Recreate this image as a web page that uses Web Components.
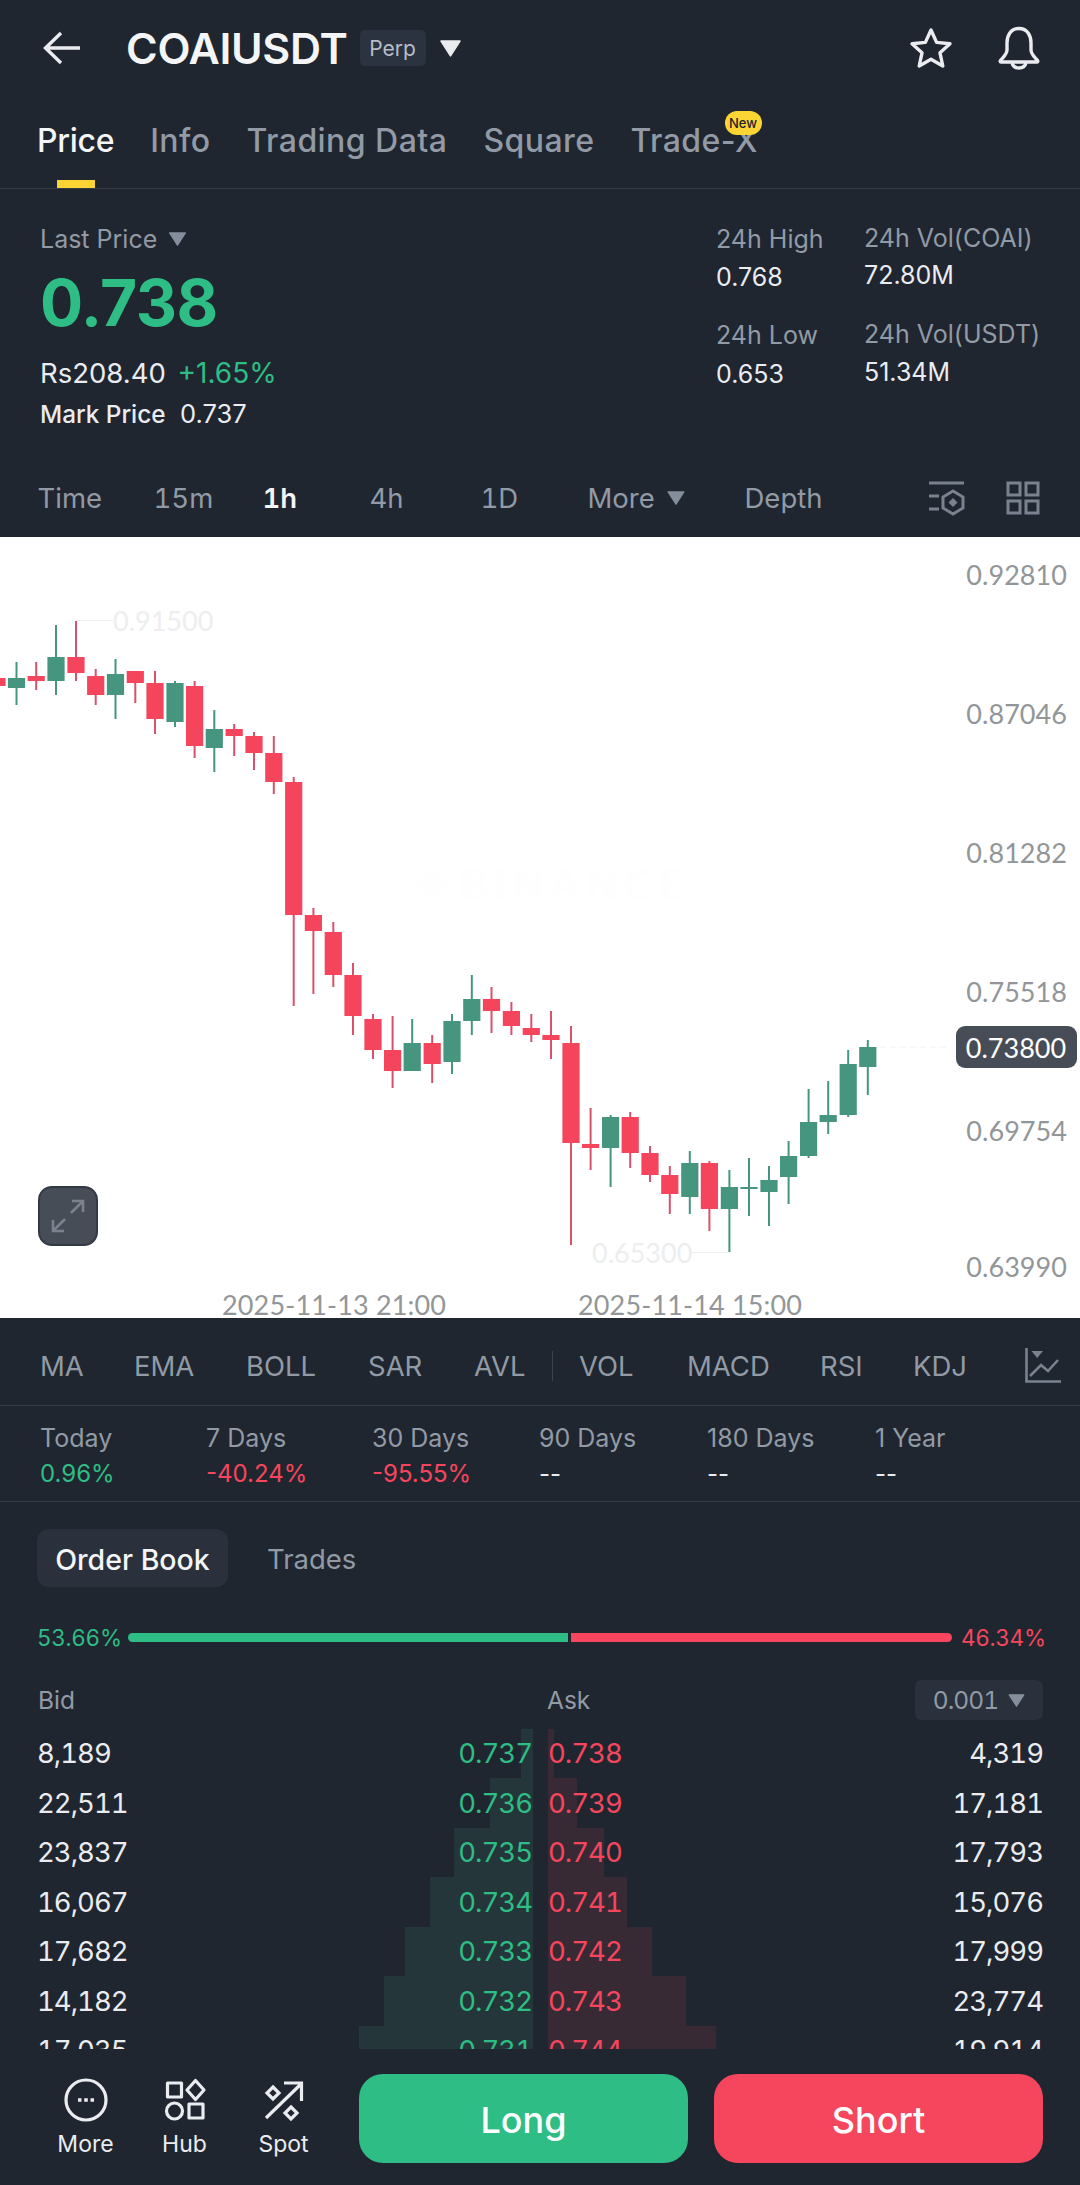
<!DOCTYPE html>
<html><head><meta charset="utf-8">
<style>
html,body{margin:0;padding:0;background:#1f2630}
body{width:1080px;height:2185px;overflow:hidden;font-family:Inter,"Liberation Sans",sans-serif;color:#eaecef}
</style></head>
<body>
<bn-app>
  <bn-topbar></bn-topbar>
  <bn-tabs></bn-tabs>
  <bn-stats></bn-stats>
  <bn-intervals></bn-intervals>
  <bn-chart></bn-chart>
  <bn-indicators></bn-indicators>
  <bn-returns></bn-returns>
  <bn-book></bn-book>
  <bn-actions></bn-actions>
</bn-app>
<script>
function def(name,html,init){
  customElements.define(name,class extends HTMLElement{
    constructor(){super();const s=this.attachShadow({mode:'open'});s.innerHTML=html;if(init)init(s);}
  });
}
const tri=(w,h,c)=>`<svg width="${w}" height="${h}" viewBox="0 0 20 16"><path d="M1 1H19L10 15Z" fill="${c}" stroke="${c}" stroke-linejoin="round" stroke-width="1.5"/></svg>`;

def('bn-app',`<style>:host{display:flex;flex-direction:column;width:1080px;height:2185px;overflow:hidden;background:#1f2630}</style><slot></slot>`);

def('bn-topbar',`<style>
:host{display:flex;align-items:center;height:96px;flex:none;box-sizing:border-box;padding-left:43px;padding-right:40px}
.t{font-size:43px;font-weight:600;color:#f4f5f6;margin-left:46px;letter-spacing:-.3px}
.b{margin-left:12px;width:66px;height:36px;border-radius:5px;background:#2b3340;color:#b7bdc6;font-size:21px;display:flex;align-items:center;justify-content:center}
.tr{margin-left:14px;display:flex}
.sp{flex:1}
svg{display:block}
</style>
<svg width="37" height="34" viewBox="0 0 37 34" fill="none" stroke="#eaecef" stroke-width="3.4"><path d="M37 17H3M18 2L2.5 17L18 32"/></svg>
<div class="t">COAIUSDT</div><div class="b">Perp</div><div class="tr">${tri(21,17,'#eaecef')}</div><div class="sp"></div>
<svg width="44" height="42" viewBox="0 0 44 42" fill="none" stroke="#eaecef" stroke-width="3.4" stroke-linejoin="round"><path d="M22 3L27.6 15.4L41 16.8L31 25.8L33.8 39L22 32.3L10.2 39L13 25.8L3 16.8L16.4 15.4Z"/></svg>
<svg width="42" height="44" viewBox="0 0 42 44" fill="none" stroke="#eaecef" stroke-width="3.4" stroke-linejoin="round" style="margin-left:45px"><path d="M21 2.5C12.5 2.5 9 9.5 9 17V24C9 28 6 30.5 2.5 34.5C2 35 2 36 3 36H39C40 36 40 35 39.5 34.5C36 30.5 33 28 33 24V17C33 9.5 29.5 2.5 21 2.5Z"/><path d="M14 37C15 40.5 18 42 21 42S27 40.5 28 37"/></svg>`);

def('bn-tabs',`<style>
:host{display:flex;height:93px;flex:none;box-sizing:border-box;border-bottom:1px solid #333b47;padding-left:37px;position:relative;gap:36px;align-items:flex-start;padding-top:26px;font-size:32px;font-weight:500;color:#929aa5;letter-spacing:.45px}
.a{color:#f4f5f6;position:relative;letter-spacing:-.3px}
.a:after{content:"";position:absolute;left:20px;width:38px;height:8px;bottom:-28px;background:#fcd535}
.x{position:relative}
.n{position:absolute;left:94px;top:-11px;width:37px;height:24px;border-radius:12px;background:#fcd535;color:#1e2329;font-size:13px;font-weight:500;letter-spacing:0;display:flex;align-items:center;justify-content:center;font-style:normal}
span{line-height:38px}
</style>
<span class="a">Price</span><span>Info</span><span>Trading Data</span><span>Square</span><span class="x">Trade-X<i class="n">New</i></span>`);

def('bn-stats',`<style>
:host{display:grid;grid-template-columns:676px 148px 1fr;height:271px;flex:none;box-sizing:border-box;padding:33px 0 0 40px;font-size:25px;color:#eaecef}
div div{line-height:34px;white-space:nowrap}
.g{color:#929aa5}
.big{font-size:64px;font-weight:700;line-height:76px!important;margin-top:9px;color:#2ebd85;letter-spacing:-.5px}
.gr{color:#2ebd85}
.l{display:flex;align-items:center;gap:11px}
.c2{margin-top:-1px}
</style>
<div>
 <div class="g l">Last Price ${tri(19,14,'#848e9c')}</div>
 <div class="big">0.738</div>
 <div style="margin-top:15px;font-size:27.5px">Rs208.40 <span class="gr" style="margin-left:4px;font-size:28px">+1.65%</span></div>
 <div style="margin-top:7px;font-size:24.3px;font-weight:500">Mark Price <span style="margin-left:8px;font-size:25.5px;font-weight:400">0.737</span></div>
</div>
<div>
 <div class="g">24h High</div><div style="margin-top:4px">0.768</div>
 <div class="g" style="margin-top:24px">24h Low</div><div style="margin-top:5px">0.653</div>
</div>
<div class="c2">
 <div class="g">24h Vol(COAI)</div><div style="margin-top:3px">72.80M</div>
 <div class="g" style="margin-top:25px">24h Vol(USDT)</div><div style="margin-top:4px">51.34M</div>
</div>`);

def('bn-intervals',`<style>
:host{display:block;height:77px;flex:none;box-sizing:border-box}
.r{display:grid;grid-template-columns:116px 109px 107px 111px 107px 157px 183.5px 78px 1fr;height:76px;padding-left:37.5px;align-items:center;font-size:27.5px;color:#929aa5;font-weight:400;font-variant-numeric:tabular-nums}
.w{color:#f4f5f6;font-weight:600}
.m{display:flex;align-items:center;gap:12px}
svg{display:block}
</style>
<div class="r"><span>Time</span><span>15m</span><span class="w">1h</span><span>4h</span><span>1D</span><span class="m">More ${tri(18,14,'#848e9c')}</span><span>Depth</span>
<svg width="38" height="36" viewBox="0 0 38 36" fill="none" stroke="#7a8290" stroke-width="3"><path d="M1 3H36M1 16H11M1 29H11"/><path d="M25 11L35 17V28L25 34L15 28V17Z"/><path d="M25 18L29.5 22.5L25 27L20.5 22.5Z" fill="#7a8290" stroke="none"/></svg>
<svg width="34" height="34" viewBox="0 0 34 34" fill="none" stroke="#7a8290" stroke-width="3"><rect x="2" y="2" width="12" height="12"/><rect x="20" y="2" width="12" height="12"/><rect x="2" y="20" width="12" height="12"/><rect x="20" y="20" width="12" height="12"/></svg>
</div>`);

const candles=[
['r',-3,null,678,686],
['g',16.5,662,678,688,705],
['r',36.2,662,676,681,690],
['g',56,625,657,681,695],
['r',76,621,657,673,681],
['r',95.7,669,676,695,705],
['g',115.5,659,674,695,719],
['r',135.3,671,671,683,703],
['r',155,671,683,719,734],
['g',175,681,683,722,727],
['r',194.6,681,686,746,758],
['g',214.3,710,729,748,772],
['r',234.2,724,729,736,756],
['r',254,732,736,753,770],
['r',273.8,736,753,782,794],
['r',293.7,777,782,915,1006],
['r',313.4,908,915,931,994],
['r',333.3,922,932,975,987],
['r',353,963,975,1016,1035],
['r',373,1014,1019,1050,1059],
['r',392.6,1016,1050,1071,1088],
['g',412.2,1019,1043,1071,1071],
['r',432.2,1035,1043,1064,1083],
['g',452,1014,1021,1062,1074],
['g',471.8,975,999,1021,1035],
['r',491.5,987,999,1011,1033],
['r',511.4,1002,1011,1026,1035],
['r',531.3,1014,1028,1035,1042],
['r',551,1011,1035,1040,1059],
['r',571,1026,1043,1143,1245],
['r',590.6,1108,1144,1148,1170],
['g',610.6,1115,1117,1148,1187],
['r',630.2,1112,1117,1153,1168],
['r',650,1146,1153,1175,1182],
['r',669.8,1166,1175,1194,1214],
['g',689.8,1151,1163,1197,1214],
['r',709.4,1161,1163,1209,1231],
['g',729.4,1170,1187,1209,1252],
['g',749,1158,1187,1189,1216],
['g',769,1166,1180,1192,1226],
['g',788.6,1141,1156,1177,1204],
['g',808.6,1089,1122,1156,1158],
['g',828.2,1081,1115,1122,1134],
['g',848.2,1050,1064,1115,1117],
['g',867.8,1040,1047,1067,1095]
];
def('bn-chart',`<style>
:host{display:block;position:relative;height:781px;flex:none;background:#fff;overflow:hidden;font-family:Lato,sans-serif;font-size:27px;color:#929699}
svg{position:absolute;left:0;top:0}
.ax{position:absolute;right:13px;line-height:32px;letter-spacing:.05px}
.f{position:absolute;color:#eceef0;line-height:32px}
.d{position:absolute;top:752px;line-height:32px;letter-spacing:.15px}
.wm{position:absolute;left:460px;top:322px;font-size:42px;font-weight:700;color:#fefefe;letter-spacing:6px;line-height:50px}
.pill{position:absolute;left:956px;top:489px;width:121px;height:42px;border-radius:9px;background:#474d57;color:#fff;display:flex;align-items:center;justify-content:center;box-sizing:border-box;padding-right:1px}
.ex{position:absolute;left:38px;top:649px;width:60px;height:60px;box-sizing:border-box;border-radius:14px;background:#474d57;border:2px solid #333a45;display:flex;align-items:center;justify-content:center}
</style>
<svg id="s" width="1080" height="781" viewBox="0 537 1080 781"></svg>
<div class="wm">BINANCE</div>
<div class="f" style="left:113px;top:68px">0.91500</div>
<div class="f" style="left:592px;top:700px">0.65300</div>
<div class="ax" style="top:22px">0.92810</div>
<div class="ax" style="top:161px">0.87046</div>
<div class="ax" style="top:300px">0.81282</div>
<div class="ax" style="top:439px">0.75518</div>
<div class="ax" style="top:578px">0.69754</div>
<div class="ax" style="top:714px">0.63990</div>
<div class="pill">0.73800</div>
<div class="d" style="left:222px">2025-11-13 21:00</div>
<div class="d" style="left:578px">2025-11-14 15:00</div>
<div class="ex"><svg style="position:static" width="36" height="36" viewBox="0 0 36 36" fill="none" stroke="#7b828e" stroke-width="2.6"><path d="M21 15L33 3M22 3H33V14M15 21L3 33M3 22V33H14"/></svg></div>`,
s=>{
  let h='<path d="M415 884L432 867L449 884L432 901Z" fill="#fefefe"/><path d="M76 620.5H113M692 1252.5H730" stroke="#eef0f1" stroke-width="1.2"/><path d="M880 1047H950" stroke="#f0f1f2" stroke-width="1" stroke-dasharray="6 4"/>';
  for(const c of candles){
    const col=c[0]=='g'?'#46967f':'#f4455d', x=c[1];
    if(c[2]===null){ h+=`<rect x="${x-8.6}" y="${c[3]}" width="17.2" height="${c[4]-c[3]}" fill="${col}"/>`; continue; }
    h+=`<rect x="${x-1}" y="${c[2]}" width="2" height="${c[5]-c[2]}" fill="${c[0]=='g'?'#46967f':'#d9516a'}"/>`;
    h+=`<rect x="${x-8.6}" y="${c[3]}" width="17.2" height="${c[4]-c[3]}" fill="${col}"/>`;
  }
  s.getElementById('s').innerHTML=h;
});

def('bn-indicators',`<style>
:host{display:block;height:88px;flex:none;box-sizing:border-box;border-bottom:1px solid #333b47}
.r{display:grid;grid-template-columns:94px 112px 122px 106px 78px 27px 108px 133px 93px 113px 1fr;padding:8px 0 0 40px;height:87px;box-sizing:border-box;align-items:center;font-size:27.5px;font-weight:400;color:#929aa5}
i{display:block;width:1px;height:30px;background:#3a424e}
svg{display:block;margin-left:-1px}
</style>
<div class="r"><span>MA</span><span>EMA</span><span>BOLL</span><span>SAR</span><span>AVL</span><i></i><span>VOL</span><span>MACD</span><span>RSI</span><span>KDJ</span>
<svg width="36" height="36" viewBox="0 0 36 36" fill="none" stroke="#7a8290" stroke-width="2.6"><path d="M1.5 0V33.5H36"/><path d="M5 28L16 17L23 23L33 12"/><path d="M6.5 3H18L12.2 10Z" fill="#7a8290" stroke="none"/></svg></div>`);

def('bn-returns',`<style>
:host{display:block;height:96px;flex:none;box-sizing:border-box;border-bottom:1px solid #333b47;font-size:25px;color:#929aa5}
.r{display:grid;grid-template-columns:166px 166px 167px 168px 168px 1fr;padding:15px 0 0 40px}
span{display:block;line-height:34px;white-space:nowrap}
b{display:block;font-weight:400;font-size:24px;line-height:34px;margin-top:2px;color:#eaecef}
.g{color:#2ebd85}.d{color:#f6465d}
</style>
<div class="r">
<span>Today<b class="g">0.96%</b></span><span>7 Days<b class="d">-40.24%</b></span><span>30 Days<b class="d">-95.55%</b></span><span>90 Days<b>--</b></span><span>180 Days<b>--</b></span><span>1 Year<b>--</b></span>
</div>`);

const rows=[[ '8,189','0.737','0.738','4,319',521,554],['22,511','0.736','0.739','17,181',490,577],['23,837','0.735','0.740','17,793',454,604],['16,067','0.734','0.741','15,076',430,627],['17,682','0.733','0.742','17,999',405,652],['14,182','0.732','0.743','23,774',384,686],['17,035','0.731','0.744','19,914',359,716]];
def('bn-book',`<style>
:host{display:block;height:547px;flex:none;overflow:hidden;font-size:27.5px;color:#eaecef;box-sizing:border-box;padding-top:27px;font-variant-numeric:tabular-nums}
.tabs{display:flex;align-items:center;margin-left:37px;height:58px;font-weight:500}
.ob{width:191px;height:58px;box-sizing:border-box;padding-top:2px;border-radius:12px;background:#2a313d;display:flex;align-items:center;justify-content:center;color:#f4f5f6;font-size:28.5px}
.tr{margin-left:39px;padding-top:2px;color:#929aa5;font-weight:400;font-size:27.5px}
.ratio{display:flex;align-items:center;margin:36px 37px 0;height:28px;font-size:22.5px;letter-spacing:-.3px}
.ratio span{width:82px;white-space:nowrap}
.g{color:#2ebd85}.d{color:#f6465d}
.bg{width:440px;height:9px;background:#2ebd85;border-radius:5px 0 0 5px;margin-left:9px}
.br{width:381px;height:9px;background:#f6465d;border-radius:0 5px 5px 0;margin:0 9px 0 3px}
.hd{display:flex;align-items:center;height:40px;margin:29px 37px 0 38px;font-size:24.5px;color:#929aa5}
.hd>span:first-child{width:509px}
.ask{flex:1}
.pr{width:128px;height:40px;border-radius:7px;background:#2a313d;display:flex;align-items:center;justify-content:center;gap:10px;box-sizing:border-box;font-size:24.5px;letter-spacing:-.9px}
.rows{height:321px;margin-top:8.5px;overflow:hidden}
.row{position:relative;display:grid;grid-template-columns:1fr 76px 16px 76px 1fr;height:49.5px;align-items:center;padding:0 37px;letter-spacing:-1px}
.row>span{position:relative}
.p{text-align:right}
.q{text-align:right}
.bar{position:absolute;top:0;bottom:0}
</style>
<div class="tabs"><div class="ob">Order Book</div><div class="tr">Trades</div></div>
<div class="ratio"><span class="g">53.66%</span><div class="bg"></div><div class="br"></div><span class="d">46.34%</span></div>
<div class="hd"><span>Bid</span><span class="ask">Ask</span><span class="pr">0.001 ${tri(17,13,'#848e9c')}</span></div>
<div class="rows" id="r"></div>`,
s=>{
  s.getElementById('r').innerHTML=rows.map(r=>`<div class="row"><div class="bar" style="left:${r[4]}px;width:${533-r[4]}px;background:#243639"></div><div class="bar" style="left:547.5px;width:${r[5]-547.5}px;background:#382a35"></div><span>${r[0]}</span><span class="g p">${r[1]}</span><span></span><span class="d">${r[2]}</span><span class="q">${r[3]}</span></div>`).join('');
});

def('bn-actions',`<style>
:host{display:flex;height:136px;flex:none;box-sizing:border-box;padding:25px 37px 22px 0}
.n{width:99px;display:flex;flex-direction:column;align-items:center;font-size:23px;font-weight:400;color:#eaecef;height:89px;padding-top:4px;box-sizing:border-box;line-height:28px}
.n svg{display:block;margin-bottom:8px}
.ns{display:flex;margin-left:36px;width:323px}
.btn{width:329px;height:89px;padding-top:2px;box-sizing:border-box;border-radius:24px;display:flex;align-items:center;justify-content:center;font-size:36px;font-weight:500;color:#fff}
.l{background:#2ebd85}.s{background:#f6465d;margin-left:26px}
</style>
<div class="ns">
<div class="n"><svg width="44" height="44" viewBox="0 0 44 44" fill="none" stroke="#eaecef" stroke-width="3.2"><circle cx="22" cy="22" r="20"/><path d="M14 22H17.5M20.2 22H23.8M26.5 22H30" stroke-width="3.6"/></svg>More</div>
<div class="n"><svg width="44" height="44" viewBox="0 0 44 44" fill="none" stroke="#eaecef" stroke-width="3.2" stroke-linejoin="round"><rect x="4.5" y="5" width="14" height="14"/><path d="M32.5 2.5L41 12L32.5 21.5L24 12Z"/><circle cx="11.5" cy="33" r="8"/><rect x="26" y="26" width="14" height="14"/></svg>Hub</div>
<div class="n"><svg width="44" height="44" viewBox="0 0 44 44" fill="none" stroke="#eaecef" stroke-width="3.2"><path d="M4 40L39 6M22 5H39.5V23"/><path d="M11 9L17 15L11 21L5 15Z"/><path d="M29 29L35 35L29 41L23 35Z"/></svg>Spot</div>
</div>
<div class="btn l">Long</div><div class="btn s">Short</div>`);
</script>
</body></html>
